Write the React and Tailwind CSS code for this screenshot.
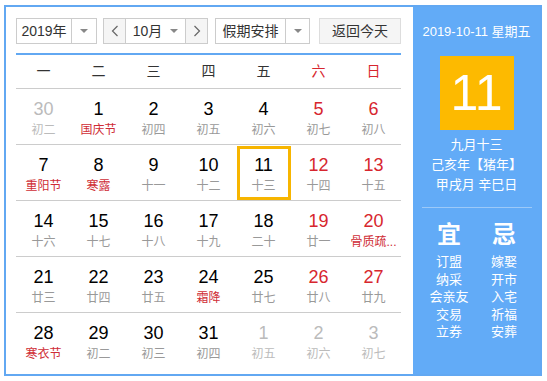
import React from 'react'

const FONT = '"Liberation Sans", "Noto Sans CJK SC", sans-serif'

// fade: other month, wk: weekend (red number), hol: lunar text is a festival (red)
const weeks = [
  [
    { d: 30, l: '初二', fade: true },
    { d: 1, l: '国庆节', hol: true },
    { d: 2, l: '初四' },
    { d: 3, l: '初五' },
    { d: 4, l: '初六' },
    { d: 5, l: '初七', wk: true },
    { d: 6, l: '初八', wk: true },
  ],
  [
    { d: 7, l: '重阳节', hol: true },
    { d: 8, l: '寒露', hol: true },
    { d: 9, l: '十一' },
    { d: 10, l: '十二' },
    { d: 11, l: '十三', sel: true },
    { d: 12, l: '十四', wk: true },
    { d: 13, l: '十五', wk: true },
  ],
  [
    { d: 14, l: '十六' },
    { d: 15, l: '十七' },
    { d: 16, l: '十八' },
    { d: 17, l: '十九' },
    { d: 18, l: '二十' },
    { d: 19, l: '廿一', wk: true },
    { d: 20, l: '骨质疏松日', wk: true, hol: true },
  ],
  [
    { d: 21, l: '廿三' },
    { d: 22, l: '廿四' },
    { d: 23, l: '廿五' },
    { d: 24, l: '霜降', hol: true },
    { d: 25, l: '廿七' },
    { d: 26, l: '廿八', wk: true },
    { d: 27, l: '廿九', wk: true },
  ],
  [
    { d: 28, l: '寒衣节', hol: true },
    { d: 29, l: '初二' },
    { d: 30, l: '初三' },
    { d: 31, l: '初四' },
    { d: 1, l: '初五', fade: true },
    { d: 2, l: '初六', fade: true },
    { d: 3, l: '初七', fade: true },
  ],
]

const weekdays = ['一', '二', '三', '四', '五', '六', '日']

function Caret() {
  return (
    <span className="w-0 h-0 border-l-[4px] border-r-[4px] border-t-[4px] border-l-transparent border-r-transparent border-t-[#888]" />
  )
}

function Chevron({ left }) {
  return (
    <svg width="8" height="12" viewBox="0 0 8 12" fill="none" stroke="#666" strokeWidth="1.2">
      <polyline points={left ? '6.5,1 1.5,6 6.5,11' : '1.5,1 6.5,6 1.5,11'} />
    </svg>
  )
}

function DayCell({ day }) {
  let numColor = 'text-[#000]'
  let lunarColor = 'text-[#999]'
  if (day.fade) {
    numColor = 'text-[#bbb]'
    lunarColor = 'text-[#bbb]'
  } else {
    if (day.wk) numColor = 'text-[#d7262e]'
    if (day.hol) lunarColor = 'text-[#cf2d36]'
  }
  return (
    <div className="h-[55px] flex items-center justify-center">
      <div
        className={`w-[54px] h-[54px] flex flex-col items-center ${
          day.sel ? 'border-[3px] border-[#f7b500] pt-[5px]' : 'pt-[8px]'
        }`}
      >
        <span className={`text-[18px] leading-[22px] ${numColor}`}>{day.d}</span>
        <span className={`text-[12px] leading-[16px] mt-[2px] whitespace-nowrap ${lunarColor}`}>
          {day.l.length > 4 ? day.l.slice(0, 3) + '...' : day.l}
        </span>
      </div>
    </div>
  )
}

export default function App() {
  return (
    <div className="w-[547px] h-[381px] bg-white pl-[4px] pt-[5px]" style={{ fontFamily: FONT }}>
      <div className="w-[538px] h-[371px] border-2 border-[#62a8f2] flex">
        {/* Calendar */}
        <div className="w-[407px] pl-[10px] pr-[12px] pt-[11px]">
          <div className="flex items-center h-[26px] text-[14px] text-[#333]">
            <div className="flex h-full w-[81px] border border-[#ccc]">
              <div className="flex-1 flex items-center justify-center">2019年</div>
              <div className="w-[25px] border-l border-[#ccc] flex items-center justify-center">
                <Caret />
              </div>
            </div>
            <div className="flex h-full w-[105px] ml-[6px] border border-[#ccc]">
              <div className="w-[22px] bg-[#f5f5f5] border-r border-[#ccc] flex items-center justify-center">
                <Chevron left />
              </div>
              <div className="flex-1 flex items-center justify-center gap-[8px]">
                <span>10月</span>
                <Caret />
              </div>
              <div className="w-[22px] bg-[#f5f5f5] border-l border-[#ccc] flex items-center justify-center">
                <Chevron />
              </div>
            </div>
            <div className="flex h-full w-[95px] ml-[7px] border border-[#ccc]">
              <div className="flex-1 flex items-center justify-center">假期安排</div>
              <div className="w-[24px] border-l border-[#ccc] flex items-center justify-center">
                <Caret />
              </div>
            </div>
            <div className="h-full w-[82px] ml-[9px] border border-[#ddd] bg-[#f5f5f5] flex items-center justify-center">
              返回今天
            </div>
          </div>

          <div className="mt-[9px] h-[2px] bg-[#62a8f2]" />

          <div className="grid grid-cols-7 h-[34px] border-b border-[#ccc] text-[14px]">
            {weekdays.map((w, i) => (
              <div
                key={w}
                className={`flex items-center justify-center ${i >= 5 ? 'text-[#d7262e]' : 'text-[#333]'}`}
              >
                {w}
              </div>
            ))}
          </div>

          {weeks.map((week, wi) => (
            <div
              key={wi}
              className={`grid grid-cols-7 ${wi < weeks.length - 1 ? 'border-b border-[#ccc]' : ''}`}
            >
              {week.map((day, di) => (
                <DayCell key={di} day={day} />
              ))}
            </div>
          ))}
        </div>

        {/* Side panel */}
        <div className="flex-1 bg-[#62abf7] text-white flex flex-col items-center">
          <div className="mt-[17px] text-[13px] leading-[16px]">2019-10-11 星期五</div>
          <div className="mt-[16px] w-[74px] h-[74px] bg-[#fdba00] flex items-center justify-center text-[50px] leading-none">
            11
          </div>
          <div className="mt-[5px] text-[13px] leading-[20px] text-center">
            <div>九月十三</div>
            <div>己亥年【猪年】</div>
            <div>甲戌月 辛巳日</div>
          </div>
          <div className="mt-[12px] w-[110px] h-px bg-[#9cc9f8]" />
          <div className="mt-[13px] flex w-full justify-center gap-[15px]">
            {[
              { t: '宜', items: ['订盟', '纳采', '会亲友', '交易', '立券'] },
              { t: '忌', items: ['嫁娶', '开市', '入宅', '祈福', '安葬'] },
            ].map((col) => (
              <div key={col.t} className="w-[40px] flex flex-col items-center">
                <div className="text-[24px] leading-[28px] font-bold">{col.t}</div>
                <div className="mt-[4px] text-[13px] leading-[17.5px] text-center whitespace-nowrap">
                  {col.items.map((it) => (
                    <div key={it}>{it}</div>
                  ))}
                </div>
              </div>
            ))}
          </div>
        </div>
      </div>
    </div>
  )
}
